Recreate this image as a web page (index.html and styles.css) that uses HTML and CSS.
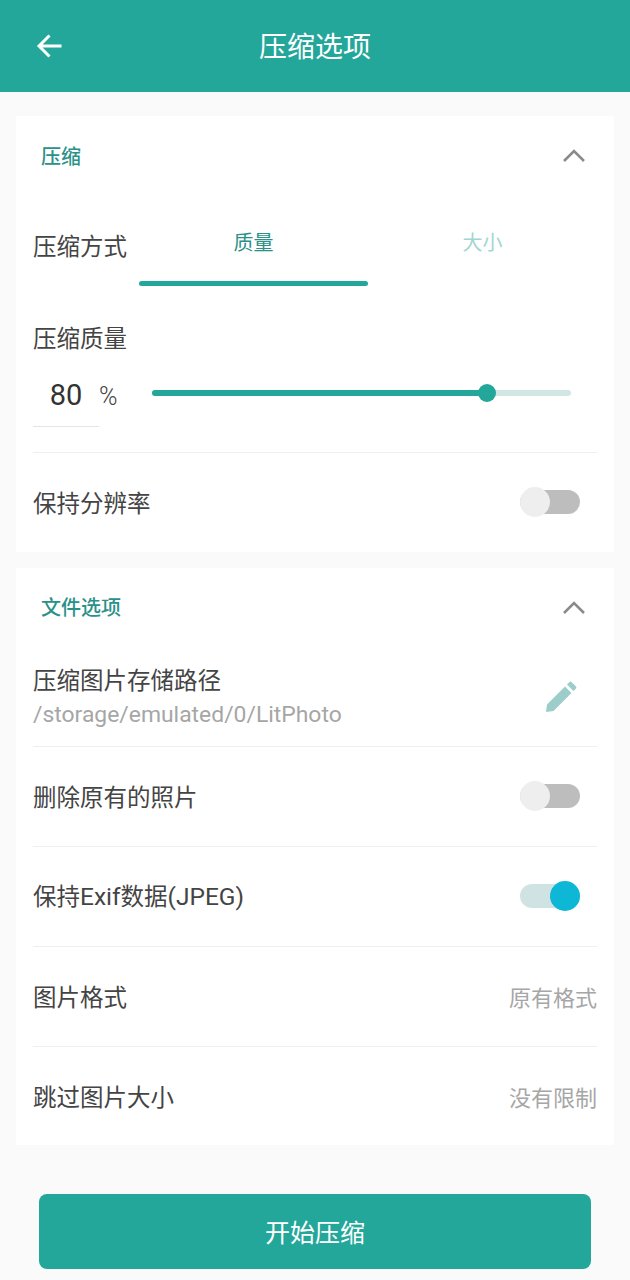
FILE: index.html
```html
<!DOCTYPE html>
<html lang="zh-CN">
<head>
    <meta charset="UTF-8">
    <meta name="viewport" content="width=device-width, initial-scale=1.0">
    <title>压缩选项</title>
    <link rel="stylesheet" href="styles.css">
</head>
<body>
    <header class="app-bar">
        <svg class="back-icon" viewBox="0 0 28 28" width="28" height="28">
            <path d="M25.5 14H3.5M13.5 3.500L3 14l10.500 10.500" fill="none" stroke="#fff" stroke-width="3"/>
        </svg>
        <h1 class="app-title">压缩选项</h1>
    </header>

    <section class="card card-compress">
        <div class="card-head">
            <h2 class="card-title">压缩</h2>
            <svg class="chevron" viewBox="0 0 24 14" width="24" height="14">
                <path d="M2 13L12 3l10 10" fill="none" stroke="#8a8a8a" stroke-width="2.6"/>
            </svg>
        </div>
        <div class="mode-row">
            <span class="label mode-label">压缩方式</span>
            <div class="tabs">
                <div class="tab tab-active">质量<div class="tab-line"></div></div>
                <div class="tab">大小</div>
            </div>
        </div>
        <div class="label quality-label">压缩质量</div>
        <div class="quality-row">
            <div class="quality-input">80</div>
            <span class="percent">%</span>
            <div class="slider">
                <div class="slider-fill"></div>
                <div class="slider-thumb"></div>
            </div>
        </div>
        <div class="row row-first">
            <span class="label">保持分辨率</span>
            <div class="switch"><div class="knob"></div></div>
        </div>
    </section>

    <section class="card card-file">
        <div class="card-head">
            <h2 class="card-title">文件选项</h2>
            <svg class="chevron" viewBox="0 0 24 14" width="24" height="14">
                <path d="M2 13L12 3l10 10" fill="none" stroke="#8a8a8a" stroke-width="2.6"/>
            </svg>
        </div>
        <div class="row path-row">
            <div>
                <div class="label">压缩图片存储路径</div>
                <div class="path-text">/storage/emulated/0/LitPhoto</div>
            </div>
            <svg class="edit-icon" viewBox="0 0 32 32" width="32" height="32">
                <path d="M1 31l1-7.500L20 5.500l6.500 6.500L8.500 30z M22 3.500l2.500-2.500a1.500 1.500 0 0 1 2 0l4.500 4.500a1.500 1.500 0 0 1 0 2L28.500 10z" fill="#9ccdcb"/>
            </svg>
        </div>
        <div class="row">
            <span class="label">删除原有的照片</span>
            <div class="switch"><div class="knob"></div></div>
        </div>
        <div class="row">
            <span class="label">保持<span class="latin">Exif</span>数据<span class="latin">(JPEG)</span></span>
            <div class="switch switch-on"><div class="knob"></div></div>
        </div>
        <div class="row">
            <span class="label">图片格式</span>
            <span class="value">原有格式</span>
        </div>
        <div class="row row-last">
            <span class="label">跳过图片大小</span>
            <span class="value">没有限制</span>
        </div>
    </section>

    <div class="actions">
        <button type="button" class="btn">开始压缩</button>
    </div>
</body>
</html>
```

FILE: styles.css
```css
* {
    box-sizing: border-box;
}
body {
    margin: 0;
    height: 1280px;
    overflow: hidden;
    background-color: #fafafa;
    font-family: "Noto Sans CJK SC", "Noto Sans", sans-serif;
    color: #444;
}
.app-bar {
    position: relative;
    height: 92px;
    padding-bottom: 2px;
    background-color: #23a79a;
    display: flex;
    align-items: center;
    justify-content: center;
}
.back-icon {
    position: absolute;
    left: 36px;
    top: 32px;
}
.app-title {
    margin: 0;
    font-size: 28px;
    font-weight: 400;
    color: #fff;
}
.card {
    margin: 0 16px 16px;
    padding: 0 17px;
    background-color: #fff;
}
.card-compress {
    margin-top: 24px;
    height: 436px;
}
.card-file {
    height: 577px;
}
.card-head {
    height: 78px;
    padding: 0 11px 0 8px;
    display: flex;
    align-items: center;
    justify-content: space-between;
}
.card-file .card-head {
    height: 79px;
    padding-bottom: 2px;
}
.card-title {
    margin: 0;
    font-size: 20px;
    font-weight: 500;
    color: #2a9188;
}
.label {
    font-size: 23.5px;
    line-height: 32px;
    color: #444;
}
.latin {
    font-family: "Roboto", sans-serif;
    font-size: 24.5px;
}
.mode-row {
    display: flex;
    height: 94px;
}
.mode-label {
    width: 106px;
    flex: none;
    margin-top: 35px;
}
.tabs {
    flex: 1;
    display: flex;
}
.tab {
    width: 229px;
    height: 92px;
    padding-top: 33px;
    display: flex;
    flex-direction: column;
    align-items: center;
    font-size: 20px;
    line-height: 30px;
    color: #a3d5d1;
}
.tab-active {
    color: #2a9188;
}
.tab-line {
    width: 100%;
    height: 5px;
    margin-top: auto;
    border-radius: 3px;
    background-color: #23a79a;
}
.quality-label {
    margin-top: 33px;
}
.quality-row {
    display: flex;
    height: 100px;
    border-bottom: 1px solid #efefef;
}
.quality-input {
    width: 66px;
    height: 74px;
    flex: none;
    border-bottom: 1px solid #e4e4e4;
    text-align: center;
    font-family: "Roboto", sans-serif;
    font-size: 29px;
    line-height: 46px;
    padding-top: 19px;
    color: #333;
}
.percent {
    width: 53px;
    flex: none;
    font-family: "Roboto", sans-serif;
    font-size: 25px;
    font-weight: 300;
    line-height: 52px;
    padding-top: 18px;
    color: #444;
}
.slider {
    position: relative;
    width: 419px;
    height: 6px;
    margin-top: 37px;
    border-radius: 3px;
    background-color: #d2e6e4;
}
.slider-fill {
    width: 335px;
    height: 6px;
    border-radius: 3px;
    background-color: #23a79a;
}
.slider-thumb {
    position: absolute;
    left: 326px;
    top: -6px;
    width: 18px;
    height: 18px;
    border-radius: 50%;
    background-color: #23a79a;
}
.row {
    height: 100px;
    padding-bottom: 2px;
    display: flex;
    align-items: center;
    justify-content: space-between;
    border-bottom: 1px solid #efefef;
}
.row-first,
.row-last {
    border-bottom: none;
}
.path-row {
    padding-right: 20px;
    padding-bottom: 0;
}
.path-text {
    margin-top: 5px;
    font-family: "Roboto", sans-serif;
    font-size: 22.9px;
    line-height: 30px;
    color: #a6a6a6;
}
.switch {
    position: relative;
    width: 60px;
    height: 24px;
    margin-right: 17px;
    border-radius: 12px;
    background-color: #bdbdbd;
}
.knob {
    position: absolute;
    left: 0;
    top: -3px;
    width: 30px;
    height: 30px;
    border-radius: 50%;
    background-color: #eeeeee;
}
.switch-on {
    background-color: #cfe3e3;
}
.switch-on .knob {
    left: 30px;
    background-color: #0db7d5;
}
.value {
    font-size: 22px;
    color: #a6a6a6;
}
.actions {
    padding: 33px 39px 0;
}
.btn {
    display: block;
    width: 100%;
    height: 75px;
    padding: 0 0 2px;
    border: none;
    border-radius: 8px;
    background-color: #23a79a;
    color: #fff;
    font-family: inherit;
    font-size: 25px;
}
```
